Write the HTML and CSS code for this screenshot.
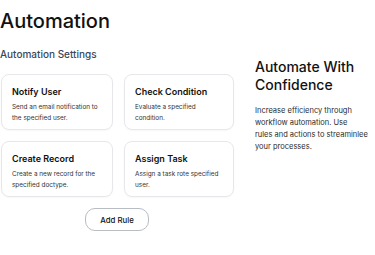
FILE: index.html
```html
<!DOCTYPE html>
<html>
<head>
<meta charset="utf-8">
<link rel="stylesheet" href="styles.css">
</head>
<body>
<h1 class="title">Automation</h1>
<div class="layout">
  <div class="main">
    <h2 class="subtitle">Automation Settings</h2>
    <div class="grid">
      <div class="card">
        <div class="card-title">Notify User</div>
        <div class="card-desc">Send an email notification to the specified user.</div>
      </div>
      <div class="card">
        <div class="card-title">Check Condition</div>
        <div class="card-desc">Evaluate a specified condition.</div>
      </div>
      <div class="card">
        <div class="card-title">Create Record</div>
        <div class="card-desc">Create a new record for the specified doctype.</div>
      </div>
      <div class="card">
        <div class="card-title">Assign Task</div>
        <div class="card-desc">Assign a task rote specified user.</div>
      </div>
    </div>
    <div class="actions">
      <button class="btn">Add Rule</button>
    </div>
  </div>
  <div class="side">
    <h3 class="side-title">Automate With Confidence</h3>
    <p class="side-text">Increase efficiency through<br>workflow automation. Use<br>rules and actions to streaminlee<br>your processes.</p>
  </div>
</div>
</body>
</html>
```
FILE: styles.css
```css
html, body {
  margin: 0;
  padding: 0;
  background: #ffffff;
  font-family: Inter, "Noto Sans", sans-serif;
  color: #111111;
}
.title {
  margin: 0;
  padding-top: 9px;
  font-size: 20px;
  font-weight: 500;
  line-height: 24px;
}
.layout {
  display: flex;
  gap: 21px;
}
.main {
  width: 234px;
}
.subtitle {
  margin: 15px 0 0;
  font-size: 10px;
  font-weight: 500;
  line-height: 13px;
  color: #3b4658;
}
.grid {
  margin-top: 13px;
  display: grid;
  grid-template-columns: 112px 110px;
  column-gap: 11px;
  row-gap: 11px;
  padding-left: 1px;
}
.card {
  border: 1px solid #e6e7ea;
  border-radius: 8px;
  padding: 11px 10px 8px;
  height: 56px;
  box-sizing: border-box;
  box-shadow: 0 1px 2px rgba(0,0,0,0.03);
}
.card-title {
  font-size: 9px;
  font-weight: 600;
  line-height: 12px;
  margin-bottom: 4px;
}
.card-desc {
  font-size: 6.4px;
  line-height: 10.5px;
  color: #333;
}
.actions {
  display: flex;
  justify-content: center;
  margin-top: 11px;
}
.btn {
  font-family: inherit;
  font-size: 7.8px;
  font-weight: 500;
  color: #111;
  background: #fff;
  border: 1px solid #b8bcc3;
  border-radius: 10px;
  width: 64px;
  height: 23px;
  padding: 0;
}
.side {
  flex: 1;
  min-width: 0;
}
.side-title {
  margin: 25px 0 0;
  font-size: 14px;
  font-weight: 500;
  line-height: 18px;
}
.side-text {
  margin: 11px 0 0;
  font-size: 7.5px;
  line-height: 12px;
  color: #2a2a2a;
  white-space: nowrap;
}
```
